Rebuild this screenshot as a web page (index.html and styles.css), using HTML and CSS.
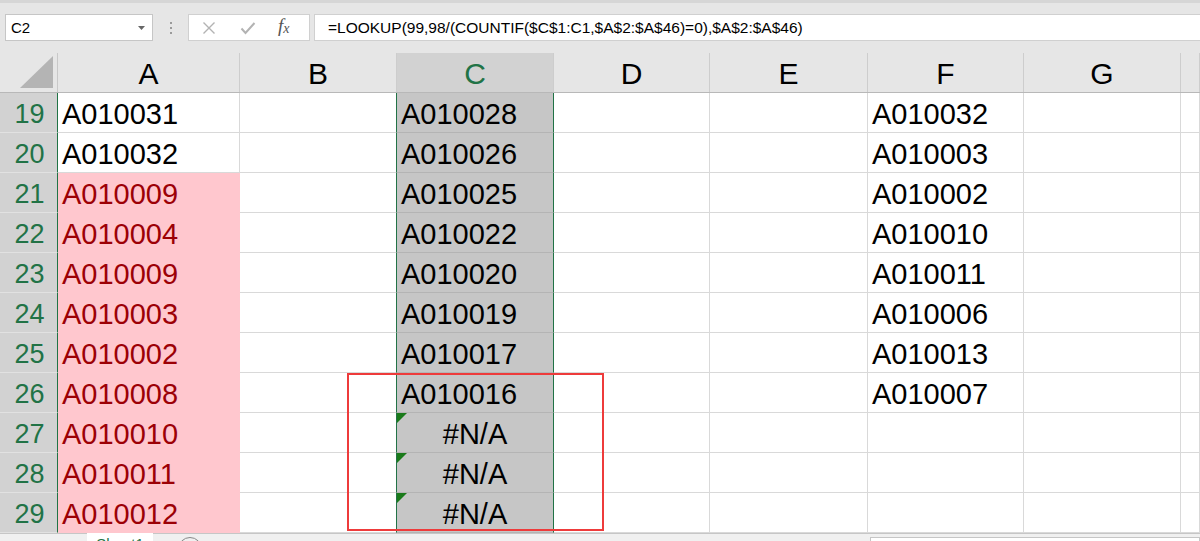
FILE: index.html
```html
<!DOCTYPE html>
<html lang="en">
<head>
  <meta charset="UTF-8">
  <title>Sheet1</title>
  <link rel="stylesheet" href="styles.css">
</head>
<body>

<!-- name box + formula bar -->
<div class="toolbar">
  <div class="namebox">
    <span>C2</span>
    <svg class="caret" width="8" height="5" viewBox="0 0 8 5"><path d="M0 0h7L3.5 4z" fill="#666"/></svg>
  </div>
  <div class="grip"><i></i><i></i><i></i></div>
  <div class="fx-buttons">
    <svg width="14" height="14" viewBox="0 0 14 14"><path d="M1.5 1.5l11 11M12.5 1.5l-11 11" stroke="#b3b3b3" stroke-width="1.4" fill="none"/></svg>
    <svg width="16" height="14" viewBox="0 0 16 14"><path d="M1.5 7.5l4 4.5L14.5 2" stroke="#b3b3b3" stroke-width="2" fill="none"/></svg>
    <span class="fx">f<sub>x</sub></span>
  </div>
  <div class="formula">=LOOKUP(99,98/(COUNTIF($C$1:C1,$A$2:$A$46)=0),$A$2:$A$46)</div>
</div>

<div class="sheet">
  <div class="row head">
    <div class="corner"><svg width="34" height="33" viewBox="0 0 34 33"><path d="M0 32L33 0V32z" fill="#b4b4b4"/></svg></div>
    <div class="col">A</div>
    <div class="col">B</div>
    <div class="col sel">C</div>
    <div class="col">D</div>
    <div class="col">E</div>
    <div class="col">F</div>
    <div class="col">G</div>
    <div class="col"></div>
  </div>
  <div id="rows"></div>

  <!-- red annotation box -->
  <div class="mark"></div>
</div>

<div class="tabs">
  <div class="tab-nav"></div>
  <div class="tab">Sheet1</div>
  <div class="add">+</div>
  <div class="hscroll"></div>
</div>

<script>
  const data = [
    [19, 'A010031', 'A010028', 'A010032'],
    [20, 'A010032', 'A010026', 'A010003'],
    [21, 'A010009', 'A010025', 'A010002'],
    [22, 'A010004', 'A010022', 'A010010'],
    [23, 'A010009', 'A010020', 'A010011'],
    [24, 'A010003', 'A010019', 'A010006'],
    [25, 'A010002', 'A010017', 'A010013'],
    [26, 'A010008', 'A010016', 'A010007'],
    [27, 'A010010', '#N/A', ''],
    [28, 'A010011', '#N/A', ''],
    [29, 'A010012', '#N/A', '']
  ];

  const rows = document.getElementById('rows');
  data.forEach(([n, a, c, f]) => {
    const row = document.createElement('div');
    row.className = 'row';
    const dup = n >= 21 ? ' dup' : '';
    const err = c === '#N/A';
    row.innerHTML = `
      <div class="num">${n}</div>
      <div class="cell${dup}">${a}</div>
      <div class="cell"></div>
      <div class="cell selc${err ? ' err' : ''}">${err ? '<span class="flag"></span>' : ''}${c}</div>
      <div class="cell"></div>
      <div class="cell"></div>
      <div class="cell">${f}</div>
      <div class="cell"></div>
      <div class="cell"></div>
    `;
    rows.appendChild(row);
  });
</script>

</body>
</html>
```

FILE: styles.css
```css
html, body {
  margin: 0;
  height: 100%;
  overflow: hidden;
}
body {
  font-family: "Liberation Sans", Arial, sans-serif;
  background: #fff;
  color: #000;
}

/* formula bar */
.toolbar {
  height: 53px;
  box-sizing: border-box;
  background: #e6e6e6;
  border-top: 3px solid #d6d6d6;
  display: flex;
  align-items: flex-start;
  padding: 11px 0 0 5px;
}
.namebox {
  width: 148px;
  height: 27px;
  box-sizing: border-box;
  background: #fff;
  border: 1px solid #c6c6c6;
  display: flex;
  align-items: center;
  justify-content: space-between;
  padding: 0 6px 0 5px;
  font-size: 15px;
}
.caret {
  margin-top: 1px;
}
.grip {
  width: 35px;
  height: 27px;
  display: flex;
  flex-direction: column;
  align-items: center;
  justify-content: center;
  gap: 3px;
}
.grip i {
  width: 2px;
  height: 2px;
  background: #9a9a9a;
}
.fx-buttons {
  width: 122px;
  height: 27px;
  box-sizing: border-box;
  background: #fff;
  border: 1px solid #d0d0d0;
  display: flex;
  align-items: center;
  padding-left: 13px;
}
.fx-buttons svg:first-child {
  margin-right: 24px;
}
.fx-buttons svg:nth-child(2) {
  margin-right: 22px;
}
.fx {
  font-family: "Liberation Serif", serif;
  font-style: italic;
  font-size: 19px;
  line-height: 20px;
  color: #555;
}
.fx sub {
  font-size: 14px;
  vertical-align: -1px;
}
.formula {
  flex: 1;
  height: 27px;
  box-sizing: border-box;
  margin-left: 4px;
  background: #fff;
  border: 1px solid #d0d0d0;
  border-right: none;
  padding-left: 13px;
  line-height: 25px;
  font-size: 15.5px;
  white-space: nowrap;
}

/* grid */
.sheet {
  position: relative;
}
.row {
  display: grid;
  grid-template-columns: 58px 182px 157px 157px 156px 158px 156px 157px 1fr;
  grid-template-rows: 40px;
  height: 40px;
}
.row.head {
  grid-template-rows: 39px;
  height: 39px;
  background: #e6e6e6;
  border-bottom: 1px solid #b8b8b8;
}
.corner {
  display: flex;
  align-items: flex-end;
  justify-content: flex-end;
  padding: 0 3px 3px 0;
  border-right: 1px solid #c8c8c8;
}
.col {
  border-right: 1px solid #cdcdcd;
  text-align: center;
  font-size: 30px;
  line-height: 42px;
  color: #000;
  overflow: hidden;
}
.col.sel {
  background: #d2d2d2;
  color: #217346;
}
.num {
  background: #d2d2d2;
  color: #217346;
  font-size: 27px;
  text-align: center;
  line-height: 43px;
  padding-left: 2px;
  border-bottom: 1px solid #e1e1e1;
  border-right: 1px solid #217346;
  box-sizing: border-box;
  overflow: hidden;
}
.cell {
  box-sizing: border-box;
  border-right: 1px solid #d9d9d9;
  border-bottom: 1px solid #d9d9d9;
  font-size: 29px;
  line-height: 43px;
  padding-left: 4px;
  white-space: nowrap;
  overflow: hidden;
}
.cell.dup {
  background: #ffc7ce;
  color: #9c0006;
  border-color: #ffc7ce;
}
.cell.selc {
  position: relative;
  background: #c6c6c6;
  border-left: 1px solid #217346;
  border-right: 1px solid #217346;
  border-bottom-color: #b4b4b4;
  margin-left: -1px;
}
.cell.err {
  text-align: center;
  padding-left: 0;
}
.flag {
  position: absolute;
  top: 0;
  left: 0;
  width: 0;
  height: 0;
  border-top: 10px solid #1a7a1a;
  border-right: 10px solid transparent;
}

.mark {
  position: absolute;
  left: 347px;
  top: 320px;
  width: 257px;
  height: 158px;
  box-sizing: border-box;
  border: 2px solid #ee3b3b;
  pointer-events: none;
}

/* sheet tabs */
.tabs {
  height: 30px;
  background: #f0f0f0;
  border-top: 1px solid #c6c6c6;
  display: flex;
  align-items: flex-start;
}
.tab-nav {
  width: 87px;
}
.tab {
  width: 66px;
  background: #fff;
  text-align: center;
  font-size: 15px;
  line-height: 22px;
  color: #217346;
  margin-top: -1px;
}
.add {
  width: 24px;
  height: 24px;
  margin: 3px 0 0 25px;
  border: 1px solid #888;
  border-radius: 50%;
  box-sizing: border-box;
  text-align: center;
  line-height: 20px;
  color: #666;
}
.hscroll {
  margin-left: auto;
  width: 328px;
  height: 20px;
  margin-top: 3px;
  background: #fff;
  border: 1px solid #c6c6c6;
}
```
